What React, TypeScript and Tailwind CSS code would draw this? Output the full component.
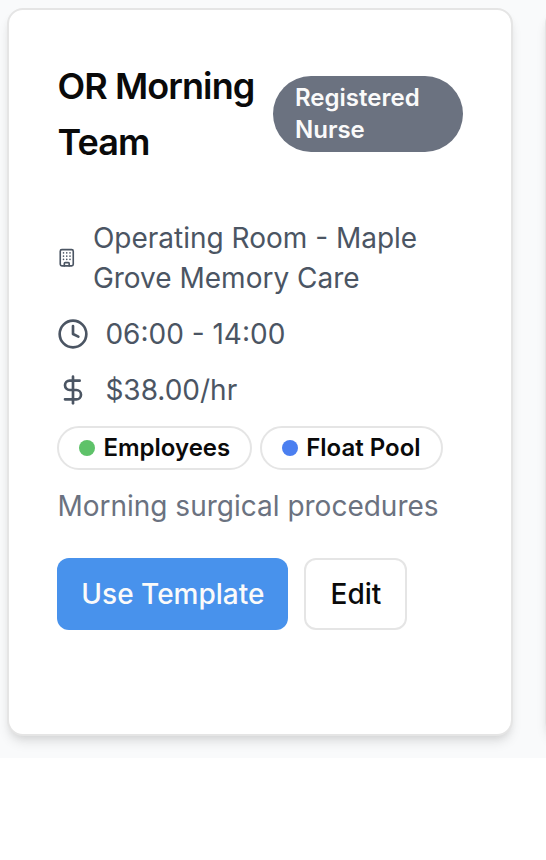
import React from "react";
import { Building, Clock, DollarSign } from "lucide-react";

function Tag({ dot, label }: { dot: string; label: string }) {
  return (
    <div className="flex h-[44px] items-center gap-2 rounded-full border-2 border-[#e5e5e5] px-5 text-[24px] font-semibold text-[#0a0a0a]">
      <span className={`size-4 rounded-full ${dot}`} />
      <span className="whitespace-nowrap">{label}</span>
    </div>
  );
}

export default function App() {
  return (
    <div className="h-[860px] w-[546px] overflow-hidden bg-white font-['Inter',sans-serif]">
      <div className="flex h-[758px] gap-8 overflow-hidden bg-[#f9fafb] pt-2 pl-[7.4px]">
        <section className="h-[728px] w-[506px] shrink-0 rounded-2xl border-2 border-[#e5e5e5] bg-white px-12 pt-12 shadow-[0_8px_12px_-2px_rgba(0,0,0,0.1),0_4px_8px_-4px_rgba(0,0,0,0.1)]">
          <header className="flex h-[112px] items-center justify-between">
            <h2 className="w-[210px] text-[36px] leading-[56px] font-semibold tracking-[-0.9px] text-[#0a0a0a]">OR Morning Team</h2>
            <div className="flex h-[76px] w-[190px] items-center rounded-full bg-[#6b7280] px-[21.6px] text-[24px] leading-8 font-semibold text-[#fafafa]">Registered Nurse</div>
          </header>
          <div className="mt-12 text-[28px] leading-10 text-[#4b5563]">
            <div className="flex items-center gap-4"><Building size={19.5} className="shrink-0" /><p className="w-[350px]">Operating Room - Maple Grove Memory Care</p></div>
            <div className="mt-4 flex items-center gap-4"><Clock size={32} /><span>06:00 - 14:00</span></div>
            <div className="mt-4 flex items-center gap-4"><DollarSign size={32} /><span>$38.00/hr</span></div>
          </div>
          <div className="mt-4 flex gap-2"><Tag dot="bg-[#5ec269]" label="Employees" /><Tag dot="bg-[#4b7ff0]" label="Float Pool" /></div>
          <p className="mt-4 text-[28px] leading-10 text-[#6b7280]">Morning surgical procedures</p>
          <div className="mt-8 flex gap-4 text-[28px] font-medium">
            <button className="h-[72px] w-[231px] rounded-xl bg-[#4892ec] text-[#fafafa]">Use Template</button>
            <button className="h-[72px] w-[103px] rounded-xl border-2 border-[#e5e5e5] text-[#0a0a0a]">Edit</button>
          </div>
        </section>
        <section className="h-[728px] w-[506px] shrink-0 rounded-2xl border-2 border-[#e5e5e5] bg-white shadow-[0_8px_12px_-2px_rgba(0,0,0,0.1),0_4px_8px_-4px_rgba(0,0,0,0.1)]" />
      </div>
    </div>
  );
}
